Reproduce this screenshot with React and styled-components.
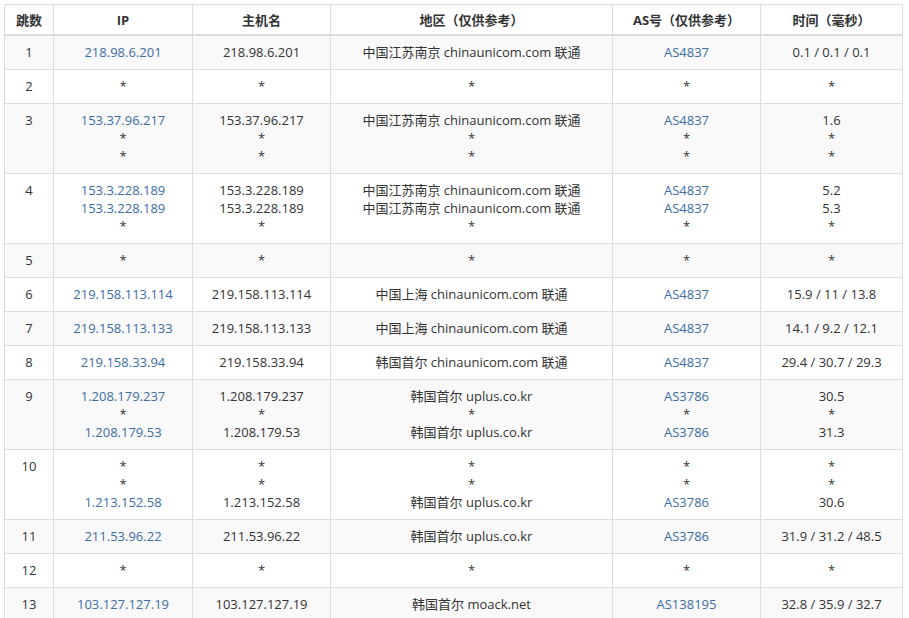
import styled, { createGlobalStyle } from 'styled-components'

const Global = createGlobalStyle`
  body { margin: 0; background: #fff; font-family: "Open Sans", "Noto Sans CJK SC", sans-serif; }
`

const Wrap = styled.div`
  padding: 4px 7px 0 4px;
`

const Table = styled.table`
  width: 898px;
  border-collapse: collapse;
  font-size: 13px;
  color: #333;
  table-layout: fixed;
`

const Th = styled.th`
  border: 1px solid #ddd;
  border-bottom: 2px solid #ddd;
  height: 29px;
  padding: 0 8px;
  font-weight: 700;
  text-align: center;
  line-height: 18px;
`

const Row = styled.tr`
  background: ${({ $odd }) => ($odd ? '#f9f9f9' : '#fff')};
`

const Td = styled.td`
  border: 1px solid #ddd;
  padding: 7px 8px 8px;
  line-height: 18px;
  text-align: center;
  vertical-align: top;
`

const Line = styled.div`
  height: 18px;
  overflow: hidden;
  color: ${({ $link }) => ($link ? '#3b6ea5' : '#333')};
  white-space: nowrap;
`

const cols = [49, 139, 138, 282, 148, 142]
const heads = ['跳数', 'IP', '主机名', '地区（仅供参考）', 'AS号（仅供参考）', '时间（毫秒）']

const U = '中国江苏南京 chinaunicom.com 联通'
const rows = [
  [['218.98.6.201'], ['218.98.6.201'], [U], ['AS4837'], ['0.1 / 0.1 / 0.1']],
  [['*'], ['*'], ['*'], ['*'], ['*']],
  [['153.37.96.217', '*', '*'], ['153.37.96.217', '*', '*'], [U, '*', '*'], ['AS4837', '*', '*'], ['1.6', '*', '*']],
  [['153.3.228.189', '153.3.228.189', '*'], ['153.3.228.189', '153.3.228.189', '*'], [U, U, '*'], ['AS4837', 'AS4837', '*'], ['5.2', '5.3', '*']],
  [['*'], ['*'], ['*'], ['*'], ['*']],
  [['219.158.113.114'], ['219.158.113.114'], ['中国上海 chinaunicom.com 联通'], ['AS4837'], ['15.9 / 11 / 13.8']],
  [['219.158.113.133'], ['219.158.113.133'], ['中国上海 chinaunicom.com 联通'], ['AS4837'], ['14.1 / 9.2 / 12.1']],
  [['219.158.33.94'], ['219.158.33.94'], ['韩国首尔 chinaunicom.com 联通'], ['AS4837'], ['29.4 / 30.7 / 29.3']],
  [['1.208.179.237', '*', '1.208.179.53'], ['1.208.179.237', '*', '1.208.179.53'], ['韩国首尔 uplus.co.kr', '*', '韩国首尔 uplus.co.kr'], ['AS3786', '*', 'AS3786'], ['30.5', '*', '31.3']],
  [['*', '*', '1.213.152.58'], ['*', '*', '1.213.152.58'], ['*', '*', '韩国首尔 uplus.co.kr'], ['*', '*', 'AS3786'], ['*', '*', '30.6']],
  [['211.53.96.22'], ['211.53.96.22'], ['韩国首尔 uplus.co.kr'], ['AS3786'], ['31.9 / 31.2 / 48.5']],
  [['*'], ['*'], ['*'], ['*'], ['*']],
  [['103.127.127.19'], ['103.127.127.19'], ['韩国首尔 moack.net'], ['AS138195'], ['32.8 / 35.9 / 32.7']],
]

const linkCols = [0, 3]

export default function App() {
  return (
    <Wrap>
      <Global />
      <Table>
        <colgroup>
          {cols.map((w, i) => <col key={i} style={{ width: w }} />)}
        </colgroup>
        <thead>
          <tr>{heads.map((h) => <Th key={h}>{h}</Th>)}</tr>
        </thead>
        <tbody>
          {rows.map((r, i) => (
            <Row key={i} $odd={i % 2 === 0}>
              <Td>{i + 1}</Td>
              {r.map((cell, c) => (
                <Td key={c}>
                  {cell.map((t, k) => (
                    <Line key={k} $link={linkCols.includes(c) && t !== '*'}>{t}</Line>
                  ))}
                </Td>
              ))}
            </Row>
          ))}
        </tbody>
      </Table>
    </Wrap>
  )
}
